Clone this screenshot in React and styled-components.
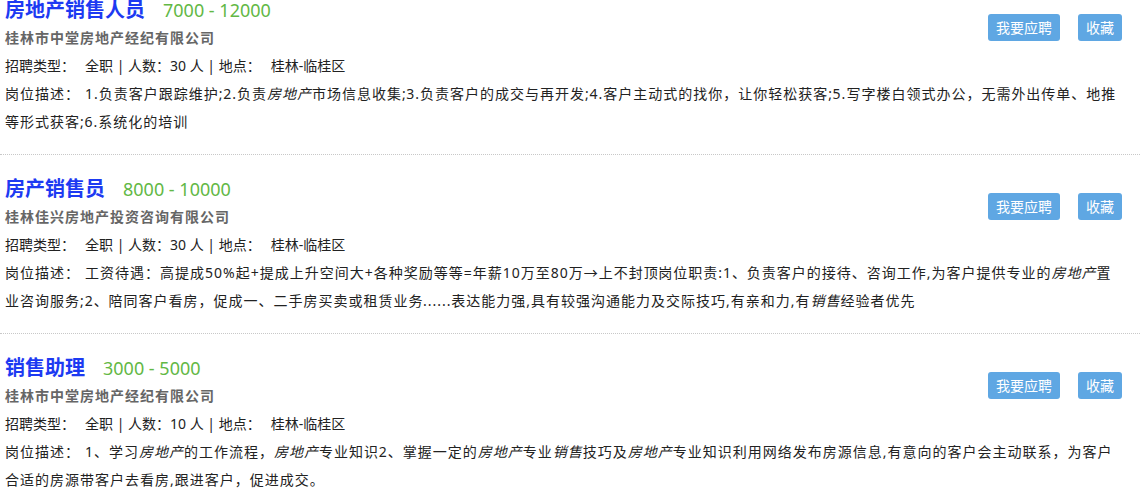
import React from 'react';
import styled, { createGlobalStyle } from 'styled-components';

const GlobalStyle = createGlobalStyle`
  html, body {
    margin: 0;
    padding: 0;
    background: #fff;
    overflow: hidden;
  }
  body {
    font-family: "Noto Sans", "Noto Sans CJK SC", sans-serif;
    font-size: 14px;
    color: #333;
  }
`;

const JobList = styled.ul`
  list-style: none;
  margin: -4px 0 0;
  padding: 0;
  width: 1140px;
`;

const JobItem = styled.li`
  padding: 20px 18px 18px 5px;
  border-bottom: 1px dotted #c8c8c8;

  &:first-child {
    padding-top: 0;
  }
`;

const Head = styled.div`
  display: flex;
  justify-content: space-between;
  align-items: flex-start;
`;

const HeadMain = styled.div`
  display: flex;
  flex-direction: column;
`;

const TitleRow = styled.div`
  display: flex;
  align-items: baseline;
  height: 28px;
  line-height: 28px;
`;

const JobTitle = styled.a`
  font-size: 20px;
  font-weight: bold;
  color: #1d3af2;
  text-decoration: none;
`;

const Salary = styled.span`
  margin-left: 18px;
  font-size: 18px;
  color: #62b845;
`;

const Company = styled.div`
  line-height: 28px;
  font-weight: bold;
  color: #666;
  letter-spacing: 1px;
`;

const Actions = styled.div`
  display: flex;
  gap: 18px;
  margin-top: 18px;
`;

const ActionButton = styled.button`
  height: 27px;
  padding: 0 8px;
  border: none;
  border-radius: 3px;
  background: #5fa7e3;
  color: #fff;
  font-family: "Noto Sans CJK SC", sans-serif;
  font-size: 14px;
  line-height: 27px;
  cursor: pointer;
`;

const InfoLine = styled.p`
  margin: 0;
  line-height: 28px;
  color: #222;
`;

const DescLine = styled.p`
  margin: 0;
  line-height: 28px;
  color: #222;
  letter-spacing: 1px;
  word-spacing: -5px;
`;

const Label = styled.span`
  margin-right: ${(p) => p.$gap || 10}px;
`;

const Key = styled.i`
  font-style: italic;
`;

const jobs = [
  {
    title: '房地产销售人员',
    salary: '7000 - 12000',
    company: '桂林市中堂房地产经纪有限公司',
    count: 30,
    desc: (
      <>
        1.负责客户跟踪维护; 2.负责<Key>房地产</Key>市场信息收集; 3.负责客户的成交与再开发; 4.客户主动式的找你，让你轻松获客; 5.写字楼白领式办公，无需外出传单、地推等形式获客; 6.系统化的培训
      </>
    ),
  },
  {
    title: '房产销售员',
    salary: '8000 - 10000',
    company: '桂林佳兴房地产投资咨询有限公司',
    count: 30,
    desc: (
      <>
        工资待遇：高提成50%起+提成上升空间大+各种奖励等等=年薪10万至80万→上不封顶 岗位职责:1、 负责客户的接待、咨询工作,为客户提供专业的<Key>房地产</Key>置业咨询服务;2、 陪同客户看房，促成一、二手房买卖或租赁业务 ...... 表达能力强,具有较强沟通能力及交际技巧,有亲和力,有<Key>销售</Key>经验者优先
      </>
    ),
  },
  {
    title: '销售助理',
    salary: '3000 - 5000',
    company: '桂林市中堂房地产经纪有限公司',
    count: 10,
    desc: (
      <>
        1、学习<Key>房地产</Key>的工作流程，<Key>房地产</Key>专业知识 2、掌握一定的<Key>房地产</Key>专业<Key>销售</Key>技巧及<Key>房地产</Key>专业知识利用网络发布房源信息,有意向的客户会主动联系，为客户合适的房源带客户去看房,跟进客户，促进成交。
      </>
    ),
  },
];

const App = () => {
  return (
    <>
      <GlobalStyle />
      <JobList>
        {jobs.map((job) => (
          <JobItem key={job.title}>
            <Head>
              <HeadMain>
                <TitleRow>
                  <JobTitle href="#">{job.title}</JobTitle>
                  <Salary>{job.salary}</Salary>
                </TitleRow>
                <Company>{job.company}</Company>
              </HeadMain>
              <Actions>
                <ActionButton>我要应聘</ActionButton>
                <ActionButton>收藏</ActionButton>
              </Actions>
            </Head>
            <InfoLine>
              <Label>招聘类型：</Label>全职 | 人数：{job.count} 人 | 地点：<Label />桂林-临桂区
            </InfoLine>
            <DescLine>
              <Label $gap={5}>岗位描述：</Label>
              {job.desc}
            </DescLine>
          </JobItem>
        ))}
      </JobList>
    </>
  );
};

export default App;
